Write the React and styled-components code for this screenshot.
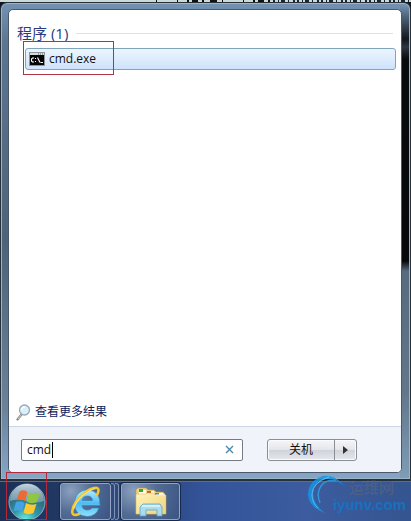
import { useState } from 'react';
import styled, { createGlobalStyle } from 'styled-components';

export default function App() {
    const [query, setQuery] = useState('cmd');

    return (
        <Desktop>
            <GlobalStyle />
            <Behind>
                <BehindMarks />
            </Behind>

            <StartMenu>
                <Panel>
                    <Results>
                        <GroupHeading>
                            程序 (1)
                            <HeadingLine />
                        </GroupHeading>
                        <ResultRow>
                            <CmdIcon />
                            cmd.exe
                            <RowMark />
                        </ResultRow>
                        <Spacer />
                        <MoreLink href="#more">
                            <SearchIcon />
                            查看更多结果
                        </MoreLink>
                    </Results>

                    <Footer>
                        <SearchBox>
                            <SearchInput
                                aria-label="搜索程序和文件"
                                value={query}
                                onChange={(e) => setQuery(e.target.value)}
                            />
                            <Caret $chars={query.length} />
                            <ClearButton aria-label="清除" onClick={() => setQuery('')}>
                                <svg width="9" height="9" viewBox="0 0 9 9" stroke="#4b86ad" strokeWidth="1.4">
                                    <path d="M1 1L8 8M8 1L1 8" />
                                </svg>
                            </ClearButton>
                        </SearchBox>
                        <PowerGroup>
                            <PowerButton>关机</PowerButton>
                            <PowerArrow aria-label="更多选项">
                                <svg width="5" height="8" viewBox="0 0 5 8">
                                    <path d="M0 0L5 4L0 8Z" fill="#333" />
                                </svg>
                            </PowerArrow>
                        </PowerGroup>
                    </Footer>
                </Panel>
            </StartMenu>

            <Taskbar>
                <StartButton aria-label="开始">
                    <StartOrb />
                    <OrbMark />
                </StartButton>
                <TaskStack>
                    <TaskButton aria-label="Internet Explorer">
                        <IeIcon />
                    </TaskButton>
                    <StackEdge />
                    <StackEdge />
                </TaskStack>
                <TaskButton aria-label="资源管理器" $wide>
                    <FolderIcon />
                </TaskButton>
            </Taskbar>

            <Watermark>
                <Swirl />
                <WatermarkText>
                    <SiteName>运维网</SiteName>
                    <SiteUrl>iyunv.com</SiteUrl>
                </WatermarkText>
            </Watermark>
        </Desktop>
    );
}

// -----------------ICONS-----------------
// lower edge of the window that lies behind the menu
function BehindMarks() {
    return (
        <svg width="258" height="2" viewBox="0 0 258 2">
            <path
                d="M3 1H120"
                stroke="#111"
                strokeWidth="2"
                strokeDasharray="1 20 1 9 2 3 6 4 2 6 7 5"
            />
            <path
                d="M120 1H258"
                stroke="#1c2a30"
                strokeWidth="2"
                strokeDasharray="2 3 1 2 4 3 1 4 2 2"
            />
        </svg>
    );
}

function CmdIcon() {
    return (
        <svg width="16" height="14" viewBox="0 0 16 14">
            <rect width="16" height="14" fill="#8e9498" />
            <rect x="1" y="1" width="14" height="2" fill="#d6dadd" />
            <path d="M9 2H10M11 2H12M13 2H14" stroke="#56616b" />
            <rect x="1" y="3" width="14" height="10" fill="#050505" />
            <path
                d="M5 6H3.5L2.5 7V9L3.5 10H5M6.5 6V7M6.5 9V10M8.5 5.5L11 10.5M11.5 10.5H14"
                fill="none"
                stroke="#fff"
                strokeWidth="1.1"
            />
        </svg>
    );
}

function SearchIcon() {
    return (
        <svg width="15" height="17" viewBox="0 0 15 17">
            <path d="M5.5 10.5L1.5 15.5" stroke="#8f8780" strokeWidth="2.2" strokeLinecap="round" />
            <path d="M5.5 10.5L2 15" stroke="#d3ccc4" strokeWidth="1" />
            <circle cx="8.5" cy="6" r="5" fill="#d9effb" stroke="#9aa8b6" strokeWidth="1.3" />
            <path d="M5.5 6A3 3 0 0 1 9 3" fill="none" stroke="#fff" strokeWidth="1.4" />
        </svg>
    );
}

function StartOrb() {
    return (
        <svg width="38" height="38" viewBox="0 0 38 38">
            <defs>
                <radialGradient id="orb" cx="45%" cy="100%" r="85%">
                    <stop offset="0" stopColor="#6ff0dc" />
                    <stop offset=".4" stopColor="#3497a8" />
                    <stop offset="1" stopColor="#2b5670" />
                </radialGradient>
                <linearGradient id="gloss" x1="0" y1="0" x2="0" y2="1">
                    <stop offset="0" stopColor="#dceaf0" stopOpacity=".85" />
                    <stop offset="1" stopColor="#a9c2cf" stopOpacity=".5" />
                </linearGradient>
            </defs>
            <circle cx="19" cy="19" r="18" fill="url(#orb)" stroke="#8bb0c4" />
            <path d="M2 18A17 17 0 0 1 36 18Q27 21 19 18Q10 15 2 18Z" fill="url(#gloss)" />
            <path d="M11.500 8.500Q16 6 19.500 9L17 18Q13 15 8.500 17.500Z" fill="#ee6a34" />
            <path d="M21 9.500Q26 12.500 32 9.500L29 19Q23.500 21.500 18.500 18.500Z" fill="#8fc740" />
            <path d="M8 19Q13 17 16.500 20L14 29Q10.500 26 5.500 28Z" fill="#43a3e3" />
            <path d="M18 20Q23 23 28.500 21L25.500 30Q20 32.500 15.500 29.500Z" fill="#fdc92f" />
        </svg>
    );
}

function IeIcon() {
    return (
        <svg width="32" height="32" viewBox="0 0 32 32">
            <defs>
                <linearGradient id="ie" x1="0" y1="0" x2="0" y2="1">
                    <stop offset="0" stopColor="#b4ecff" />
                    <stop offset=".5" stopColor="#4fbcf2" />
                    <stop offset="1" stopColor="#8fe0fc" />
                </linearGradient>
            </defs>
            <path
                d="M30 19.500H12Q12.500 24 17.500 24Q20.500 24 22 22H29Q26 30.500 17 30.500Q4.500 29.500 4.500 17.500Q5 4.500 17.500 4Q30.500 4.500 30 19.500ZM12 14.500H22.500Q22 10 17.500 10Q12.500 10 12 14.500Z"
                fill="url(#ie)"
                stroke="#2a83bd"
                strokeWidth=".6"
                fillRule="evenodd"
            />
            <path
                d="M27 9Q30 3 27 2Q22 1 13 8Q4 16 2.500 24Q1 31 9 28"
                fill="none"
                stroke="#f3c72f"
                strokeWidth="2.600"
                strokeLinecap="round"
            />
            <path d="M25 2.500Q19 4 12 10Q5 17 3.500 23" fill="none" stroke="#fff0a0" strokeWidth=".8" />
        </svg>
    );
}

function FolderIcon() {
    return (
        <svg width="34" height="32" viewBox="0 0 34 32">
            <defs>
                <linearGradient id="folder" x1="0" y1="0" x2="1" y2="1">
                    <stop offset="0" stopColor="#fff3ba" />
                    <stop offset="1" stopColor="#f0d27a" />
                </linearGradient>
            </defs>
            <path d="M2 28V4L4 2H12L14 4H20L22 6H29L31 8V28Z" fill="#efd584" stroke="#b99c4d" strokeWidth=".6" />
            <path d="M5 4H12V8H5ZM13 5H20V8H13ZM21 7H29V10H21Z" fill="#fffdf0" />
            <rect x="5" y="3" width="4" height="3" fill="#35a83b" />
            <rect x="13" y="5" width="4" height="3" fill="#d2562d" />
            <rect x="21" y="7" width="4" height="2" fill="#398fc9" />
            <path d="M2 8H11L13 7H19L22 9H32V28H2Z" fill="url(#folder)" stroke="#d1b258" strokeWidth=".5" />
            <path d="M22 9H31" stroke="#fffbe2" />
            <path
                d="M6 21L9 18H26L28 21V30H23V24H12V30H6Z"
                fill="#a5dbf3"
                fillOpacity=".95"
                stroke="#59a6cd"
                strokeWidth=".8"
            />
            <path d="M8 20H26" stroke="#eafaff" strokeWidth="1.300" />
        </svg>
    );
}

function Swirl() {
    return (
        <svg width="38" height="40" viewBox="0 0 38 40">
            <path d="M37 12Q28 0 16 2Q2 6 1 20Q1 33 18 39Q6 30 6 19Q7 7 19 5Q29 4 37 12Z" fill="#1496e6" />
            <path d="M29 7Q19 5 14 12Q9 19 13 29" fill="none" stroke="#2d9fe3" strokeWidth="1.500" />
            <path d="M22 3Q6 8 5 20Q5 29 11 34" fill="none" stroke="#6cc5f0" strokeWidth="1" />
        </svg>
    );
}

const GlobalStyle = createGlobalStyle`
    * {
        box-sizing: border-box;
    }
    body {
        margin: 0;
        font-family: "Open Sans", "Noto Sans CJK SC", sans-serif;
    }
    button, input {
        font-family: inherit;
        padding: 0;
        border: none;
        background: none;
    }
    svg {
        display: block;
        flex: none;
    }
`;

const Desktop = styled.div`
    position: relative;
    display: flex;
    flex-direction: column;
    min-height: 100vh;
    overflow: hidden;
    background: #10151b;
`;

const Behind = styled.div`
    display: flex;
    justify-content: flex-end;
    background: #cbd9d9;
`;

// -----------------START MENU-----------------
const StartMenu = styled.div`
    flex: 1;
    display: flex;
    padding: 6px 8px 6px 7px;
    border: 1px solid #27313c;
    border-bottom-width: 2px;
    border-radius: 7px 7px 0 0;
    box-shadow: inset 0 0 0 1px #9db4c8;
    background:
        linear-gradient(to bottom, #7898b8 0, #4d6279 14px, #12171c 36px, #2b3642 44px, #080b0e 56px, #060809 258px, #566a80 268px, #62778c 390px, #7f9db8 100%) right / 10px 100% no-repeat,
        linear-gradient(to bottom, #7392b2 0, #5c7690 40px, #4d6377 50%, #6b8299 85%, #86a6c6 100%);
`;

const Panel = styled.div`
    flex: 1;
    min-width: 0;
    display: flex;
    flex-direction: column;
    overflow: hidden;
    border: 1px solid #49596b;
    border-radius: 5px;
    background: white;
`;

const Results = styled.div`
    flex: 1;
    display: flex;
    flex-direction: column;
    padding: 12px 5px 5px 7px;
`;

const GroupHeading = styled.div`
    display: flex;
    align-items: center;
    gap: 8px;
    padding: 0 3px 0 1px;
    font-size: 15px;
    line-height: 22px;
    color: #2b3a80;
`;

const HeadingLine = styled.div`
    flex: 1;
    height: 1px;
    background: #dfe2e8;
`;

const ResultRow = styled.button`
    position: relative;
    display: flex;
    align-items: center;
    gap: 4px;
    height: 22px;
    margin: 4px 0 0 9px;
    padding: 0 3px;
    border: 1px solid #7fa5bd;
    border-radius: 3px;
    background: linear-gradient(to bottom, #edf5fe, #cee2fb);
    font-size: 12px;
    line-height: 18px;
    color: #111;
`;

// red outline drawn over the row
const RowMark = styled.div`
    position: absolute;
    top: -8px;
    left: -3px;
    width: 91px;
    height: 34px;
    border: 1px solid #ad3440;
`;

const Spacer = styled.div`
    flex: 1;
`;

const MoreLink = styled.a`
    display: flex;
    align-items: center;
    gap: 4px;
    font-size: 12px;
    line-height: 18px;
    text-decoration: none;
    color: #0c1d5c;
`;

const Footer = styled.div`
    display: flex;
    align-items: center;
    gap: 24px;
    height: 46px;
    padding: 0 12px;
    border-top: 1px solid #ccd6e2;
    background: #f0f3fa;
`;

const SearchBox = styled.div`
    position: relative;
    display: flex;
    align-items: center;
    flex: 0 1 222px;
    height: 22px;
    padding: 0 8px 0 5px;
    border: 1px solid #737b84;
    border-radius: 2px;
    background: white;
`;

const SearchInput = styled.input`
    flex: 1;
    min-width: 0;
    font-size: 12px;
    line-height: 18px;
    color: #111;
    outline: none;
`;

const Caret = styled.div`
    position: absolute;
    left: ${({ $chars }) => 6 + $chars * 8}px;
    width: 1px;
    height: 16px;
    background: black;
`;

const ClearButton = styled.button`
    flex: none;
`;

const PowerGroup = styled.div`
    display: flex;
    height: 22px;
    border: 1px solid #8a8f96;
    border-radius: 3px;
    background: linear-gradient(to bottom, #f5f6f8 0, #e4e6ea 48%, #cfd2d8 50%, #e6e8ec 100%);
    box-shadow: inset 0 0 0 1px #fafbfc;
`;

const PowerButton = styled.button`
    width: 66px;
    font-size: 12px;
    line-height: 18px;
    color: #111;
`;

const PowerArrow = styled.button`
    display: flex;
    align-items: center;
    justify-content: center;
    width: 22px;
    border-left: 1px solid #8a8f96;
`;

// -----------------TASKBAR-----------------
const Taskbar = styled.div`
    display: flex;
    gap: 2px;
    height: 40px;
    padding: 1px 8px;
    border-top: 1px solid #53709a;
    background: linear-gradient(to right, #1c3056 0, #25406f 30%, #34549a 50%, #3c5c9f 75%, #34558f 100%);
`;

const StartButton = styled.button`
    position: relative;
    flex: none;
    width: 50px;
`;

const OrbMark = styled.div`
    position: absolute;
    top: -11px;
    left: -2px;
    width: 41px;
    height: 48px;
    border: 1px solid #b02a3c;
`;

const TaskStack = styled.div`
    display: flex;
`;

const TaskButton = styled.button`
    display: flex;
    align-items: center;
    justify-content: center;
    width: ${({ $wide }) => ($wide ? 59 : 51)}px;
    border: 1px solid #93a5c2;
    border-radius: 3px;
    box-shadow: 0 0 0 1px #172a4c;
    background: radial-gradient(circle at 20% 20%, #8ba0bf 0, #526b93 45%, #3a5484 100%);
`;

const StackEdge = styled.div`
    width: 4px;
    border: 1px solid #7d92b4;
    border-left: none;
    border-radius: 0 3px 3px 0;
    background: #30497a;
`;

// -----------------WATERMARK-----------------
const Watermark = styled.div`
    position: absolute;
    right: 5px;
    bottom: 7px;
    display: flex;
    align-items: flex-end;
    opacity: 0.85;
    pointer-events: none;
`;

const WatermarkText = styled.div`
    display: flex;
    flex-direction: column;
    align-items: flex-end;
    margin-left: -12px;
`;

const SiteName = styled.div`
    padding-right: 12px;
    font-size: 15px;
    line-height: 18px;
    color: #56637f;
`;

const SiteUrl = styled.div`
    font-family: "Liberation Sans", Arial, sans-serif;
    font-size: 15px;
    font-weight: bold;
    line-height: 18px;
    color: #1475c9;
`;
